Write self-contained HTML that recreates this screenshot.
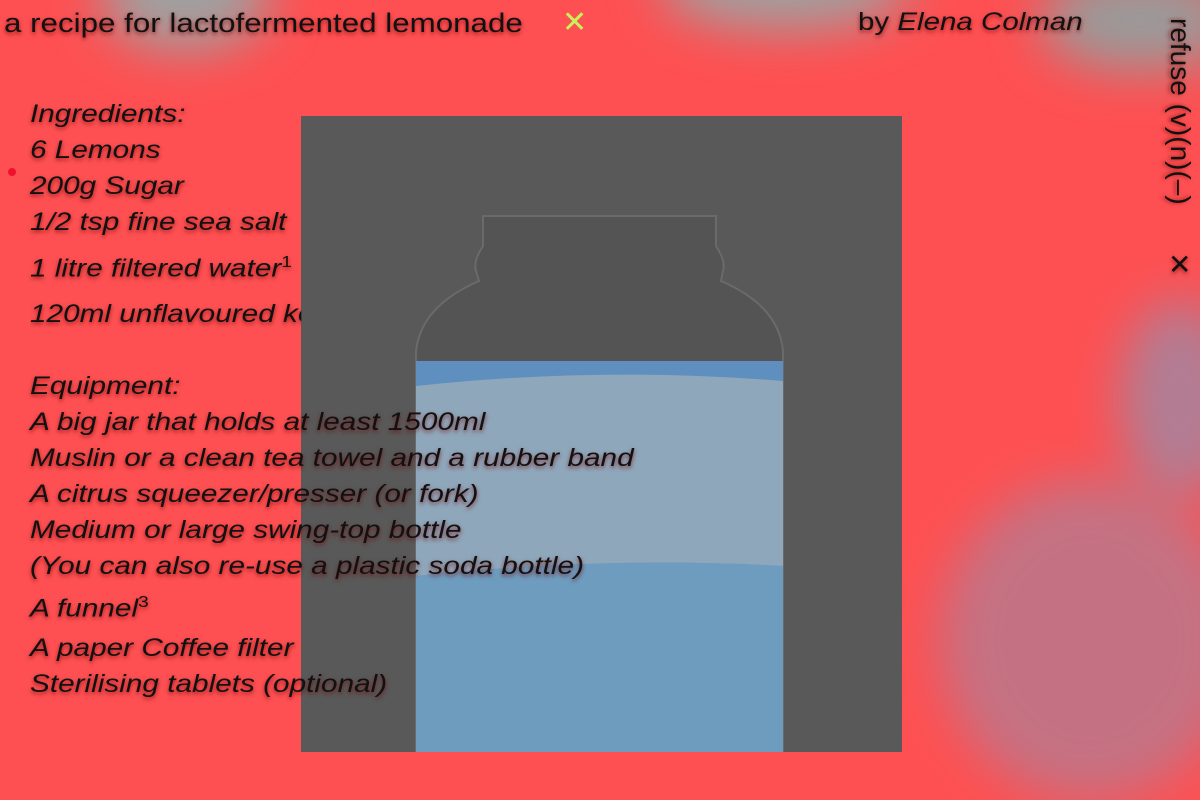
<!DOCTYPE html>
<html><head><meta charset="utf-8"><style>
html,body{margin:0;width:1200px;height:752px;overflow:hidden;background:#fe5052;font-family:"Liberation Sans",sans-serif;}
.t{position:absolute;white-space:nowrap;color:#111;text-shadow:0 2px 4px rgba(120,0,0,.7);}
.it{font-style:italic;font-size:25px;letter-spacing:0;transform:scaleX(1.19);transform-origin:left;}
.blob{position:absolute;border-radius:50%;filter:blur(25px);}
</style></head><body>
<div class="blob" style="left:100px;top:-60px;width:170px;height:110px;background:#a0a0a0"></div>
<div class="blob" style="left:660px;top:-60px;width:250px;height:90px;background:#a0a0a0"></div>
<div class="blob" style="left:1040px;top:-30px;width:200px;height:100px;background:#9a9a9a"></div>
<div class="blob" style="left:1120px;top:300px;width:120px;height:200px;background:#7f9cc0;opacity:.6"></div>
<div class="blob" style="left:940px;top:480px;width:300px;height:320px;background:#7f9cc0;opacity:.45"></div>
<svg style="position:absolute;left:301px;top:116px" width="601" height="636">
<rect width="601" height="636" fill="#595959"/>
<path d="M182 100 L182 130 Q172 145 175 155 L178 165 Q120 190 115 235 L115 636 L482 636 L482 235 Q478 190 420 165 L422 155 Q425 145 415 130 L415 100 Z" fill="#545454" stroke="#6a6a6a" stroke-width="2"/>
<path d="M115 245 L482 245 L482 636 L115 636 Z" fill="#5e8fbf"/>
<path d="M115 270 Q300 250 482 265 L482 450 Q300 440 115 460 Z" fill="#8fa7bb"/>
<path d="M115 460 Q300 440 482 450 L482 636 L115 636 Z" fill="#6e9cbf"/>
</svg>
<div class="t" style="left:4px;top:8px;font-size:27px;transform:scaleX(1.16);transform-origin:left">a recipe for lactofermented lemonade</div>
<div class="t" style="left:562px;top:5px;font-size:30px;color:#c7f25a;text-shadow:none">✕</div>
<div class="t" style="left:858px;top:8px;font-size:25px;transform:scaleX(1.18);transform-origin:left">by <i>Elena Colman</i></div>
<div class="t" style="left:1164px;top:18px;font-size:28px;writing-mode:vertical-rl">refuse (v)(n)(–)</div>
<div class="t" style="left:1168px;top:248px;font-size:28px">✕</div>
<div style="position:absolute;left:8px;top:168px;width:8px;height:8px;border-radius:50%;background:#f01030"></div>
<div class="t it" style="left:30px;top:100px">Ingredients:</div>
<div class="t it" style="left:30px;top:136px">6 Lemons</div>
<div class="t it" style="left:30px;top:172px">200g Sugar</div>
<div class="t it" style="left:30px;top:208px">1/2 tsp fine sea salt</div>
<div class="t it" style="left:30px;top:254px">1 litre filtered water<sup style="font-style:normal;font-size:16px">1</sup></div>
<div class="t it" style="left:30px;top:300px;width:228px;overflow:hidden">120ml unflavoured kombucha</div>
<div class="t it" style="left:30px;top:372px">Equipment:</div>
<div class="t it" style="left:30px;top:408px">A big jar that holds at least 1500ml</div>
<div class="t it" style="left:30px;top:444px">Muslin or a clean tea towel and a rubber band</div>
<div class="t it" style="left:30px;top:480px">A citrus squeezer/presser (or fork)</div>
<div class="t it" style="left:30px;top:516px">Medium or large swing-top bottle</div>
<div class="t it" style="left:30px;top:552px">(You can also re-use a plastic soda bottle)</div>
<div class="t it" style="left:30px;top:594px">A funnel<sup style="font-style:normal;font-size:16px">3</sup></div>
<div class="t it" style="left:30px;top:634px">A paper Coffee filter</div>
<div class="t it" style="left:30px;top:670px">Sterilising tablets (optional)</div>
</body></html>
